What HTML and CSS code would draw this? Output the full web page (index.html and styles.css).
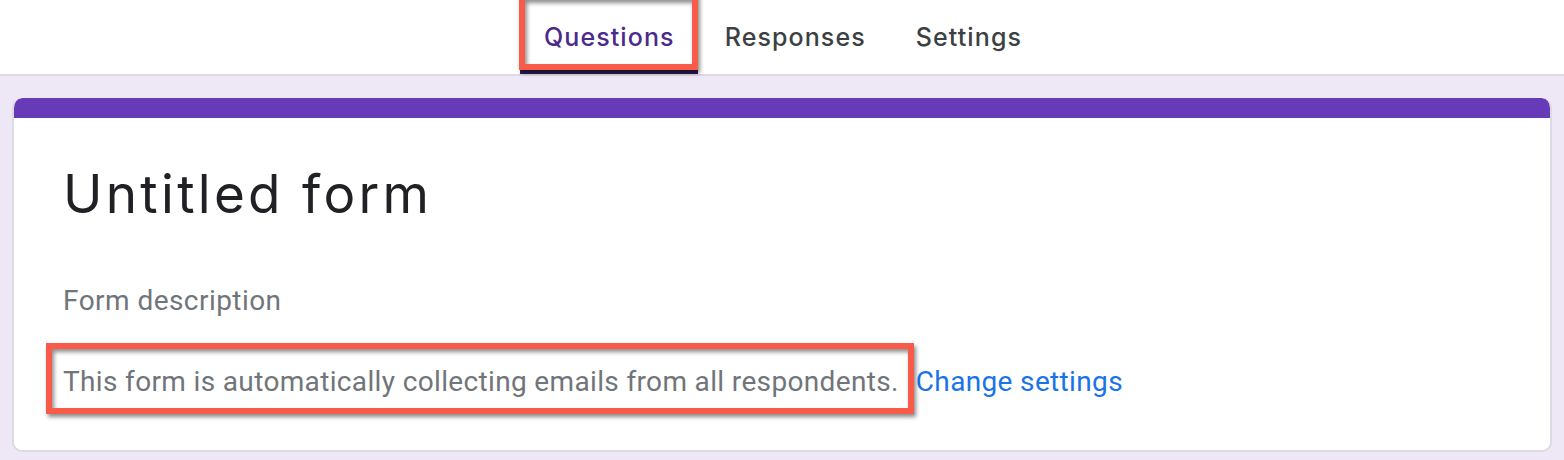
FILE: index.html
```html
<!DOCTYPE html>
<html lang="en">
<head>
<meta charset="utf-8">
<title>Untitled form</title>
<link rel="stylesheet" href="styles.css">
</head>
<body>
<header class="topbar">
  <nav class="tabs">
    <a class="tab tab-active">Questions</a>
    <a class="tab">Responses</a>
    <a class="tab">Settings</a>
  </nav>
</header>
<main class="canvas">
  <section class="card">
    <div class="card-accent"></div>
    <div class="card-body">
      <h1 class="form-title">Untitled form</h1>
      <p class="form-desc">Form description</p>
      <p class="email-note"><span class="note-text">This form is automatically collecting emails from all respondents.</span><a class="note-link">Change settings</a></p>
    </div>
  </section>
</main>
</body>
</html>
```
FILE: styles.css
```css
html, body {
  margin: 0;
  padding: 0;
}
body {
  width: 1564px;
  height: 460px;
  overflow: hidden;
  background: #ede7f6;
  font-family: Roboto, "Liberation Sans", Arial, sans-serif;
}
.topbar {
  height: 76px;
  background: #ffffff;
  border-bottom: 2px solid #dcdae2;
  box-sizing: border-box;
}
.tabs {
  display: flex;
  justify-content: center;
  gap: 2px;
  height: 100%;
}
.tab {
  position: relative;
  padding: 22px 23px 0 25px;
  font-family: Inter, Roboto, sans-serif;
  font-size: 25px;
  line-height: 30px;
  font-weight: 500;
  letter-spacing: 1.1px;
  color: #3c4043;
}
.tab-active {
  color: #4a2a8c;
}
.tab-active::before {
  content: "";
  position: absolute;
  left: 1px;
  right: 0;
  bottom: 0;
  height: 4px;
  background: #2e1a55;
}
.tab-active::after {
  content: "";
  position: absolute;
  left: 0;
  right: 0;
  top: -6px;
  bottom: 4px;
  border: 6px solid #f95b4b;
  box-shadow: 2px 3px 4px rgba(0,0,0,0.45), inset 2px 3px 4px rgba(0,0,0,0.45);
}
.canvas {
  padding: 22px 12px 0;
}
.card {
  background: #ffffff;
  border-radius: 10px;
  overflow: hidden;
  border: 2px solid #dcdae2;
  border-top: none;
}
.card-accent {
  height: 20px;
  background: #673ab7;
  margin: 0 -2px;
  border-radius: 10px 10px 0 0;
}
.card-body {
  padding: 44px 49px 50px;
}
.form-title {
  margin: 0;
  font-family: Inter, Roboto, sans-serif;
  font-size: 53px;
  font-weight: 400;
  line-height: 64px;
  letter-spacing: 3.3px;
  color: #202124;
}
.form-desc {
  margin: 57px 0 0;
  font-size: 28px;
  line-height: 36px;
  letter-spacing: 0.45px;
  color: #70757a;
}
.email-note {
  margin: 45px 0 0;
  font-size: 28px;
  line-height: 36px;
  letter-spacing: 0.35px;
  color: #70757a;
}
.note-text {
  position: relative;
}
.note-text::after {
  content: "";
  position: absolute;
  left: -17px;
  right: -15px;
  top: -22px;
  bottom: -16px;
  border: 6px solid #f95b4b;
  box-shadow: 2px 3px 4px rgba(0,0,0,0.45), inset 2px 3px 4px rgba(0,0,0,0.45);
}
.note-link {
  margin-left: 17px;
  color: #1a73e8;
}
```
